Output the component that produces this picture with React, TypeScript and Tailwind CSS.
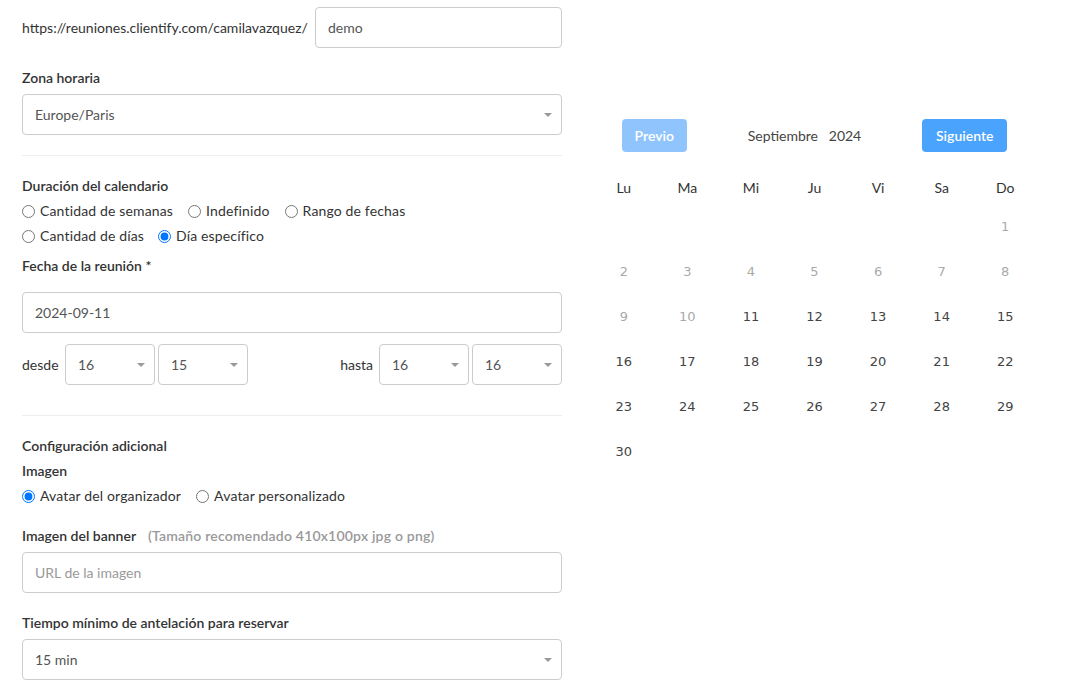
import React from 'react';

const font = { fontFamily: 'Lato, "Open Sans", sans-serif' };

const Caret = () => (
  <span className="pointer-events-none absolute right-[9px] top-1/2 -translate-y-1/2 w-0 h-0 border-l-[4px] border-r-[4px] border-t-[4px] border-l-transparent border-r-transparent border-t-[#999]" />
);

const SelectBox = ({ value, className = '' }: { value: string; className?: string }) => (
  <div className={`relative h-[41px] border border-[#ccc] rounded bg-white flex items-center pl-3 text-sm text-[#555] ${className}`}>
    {value}
    <Caret />
  </div>
);

const TextBox = ({ value, placeholder, className = '' }: { value?: string; placeholder?: string; className?: string }) => (
  <input
    readOnly
    value={value}
    placeholder={placeholder}
    className={`h-[41px] border border-[#ccc] rounded bg-white px-3 text-sm text-[#555] placeholder:text-[#999] outline-none ${className}`}
  />
);

const Radio = ({ label, checked = false }: { label: string; checked?: boolean }) => (
  <label className="flex items-center gap-[5px] text-sm text-[#333] tracking-[0.15px]">
    <input type="radio" defaultChecked={checked} className="m-0 w-[13px] h-[13px] accent-[#0075ff]" />
    {label}
  </label>
);

const Label = ({ children }: { children: React.ReactNode }) => (
  <div className="text-sm font-semibold text-[#333]">{children}</div>
);

const days: { d: number | null; muted?: boolean }[] = [
  { d: null }, { d: null }, { d: null }, { d: null }, { d: null }, { d: null }, { d: 1, muted: true },
  ...Array.from({ length: 29 }, (_, i) => ({ d: i + 2, muted: i + 2 < 11 })),
];

export default function App() {
  const weekdays = ['Lu', 'Ma', 'Mi', 'Ju', 'Vi', 'Sa', 'Do'];
  return (
    <div className="w-[1082px] h-[686px] bg-white overflow-hidden flex" style={font}>
      {/* Formulario */}
      <div className="w-[540px] ml-[22px] pt-[7px] flex flex-col">
        <div className="flex items-center">
          <span className="text-sm text-[#333] w-[293px]">https://reuniones.clientify.com/camilavazquez/</span>
          <TextBox value="demo" className="flex-1" />
        </div>

        <div className="mt-[20px]"><Label>Zona horaria</Label></div>
        <SelectBox value="Europe/Paris" className="mt-[6px]" />
        <div className="h-px bg-[#eee] mt-[20px]" />

        <div className="mt-[20px]"><Label>Duración del calendario</Label></div>
        <div className="flex gap-[15px] mt-[5px]">
          <Radio label="Cantidad de semanas" />
          <Radio label="Indefinido" />
          <Radio label="Rango de fechas" />
        </div>
        <div className="flex gap-[14px] mt-[5px]">
          <Radio label="Cantidad de días" />
          <Radio label="Día específico" checked />
        </div>
        <div className="mt-[10px]"><Label>Fecha de la reunión *</Label></div>
        <TextBox value="2024-09-11" className="mt-[16px] w-full" />

        <div className="flex items-center mt-[11px] text-sm text-[#333]">
          <span className="w-[43px]">desde</span>
          <SelectBox value="16" className="w-[90px]" />
          <SelectBox value="15" className="w-[90px] ml-[3px]" />
          <span className="flex-1 text-right pr-[6px]">hasta</span>
          <SelectBox value="16" className="w-[90px]" />
          <SelectBox value="16" className="w-[90px] ml-[3px]" />
        </div>
        <div className="h-px bg-[#eee] mt-[30px]" />

        <div className="mt-[20px]"><Label>Configuración adicional</Label></div>
        <div className="mt-[5px]"><Label>Imagen</Label></div>
        <div className="flex gap-[15px] mt-[5px]">
          <Radio label="Avatar del organizador" checked />
          <Radio label="Avatar personalizado" />
        </div>
        <div className="mt-[20px] flex items-center gap-[12px]">
          <Label>Imagen del banner</Label>
          <span className="text-sm font-semibold text-[#999] tracking-[0.2px]">(Tamaño recomendado 410x100px jpg o png)</span>
        </div>
        <TextBox placeholder="URL de la imagen" className="mt-[6px] w-full" />
        <div className="mt-[20px]"><Label>Tiempo mínimo de antelación para reservar</Label></div>
        <SelectBox value="15 min" className="mt-[6px]" />
      </div>

      {/* Calendario */}
      <div className="ml-[30px] w-[445px] pt-[119px]">
        <div className="flex items-center h-[33px]">
          <div className="w-[95px] flex justify-end">
            <button className="h-[33px] px-[13px] rounded bg-[#90c4fd] text-white text-sm font-semibold">Previo</button>
          </div>
          <div className="flex-1 text-center text-sm text-[#444]">Septiembre&nbsp;&nbsp;&nbsp;2024</div>
          <div className="w-[115px]">
            <button className="h-[33px] px-[14px] rounded bg-[#4aa3fd] text-white text-sm font-semibold">Siguiente</button>
          </div>
        </div>
        <div className="grid grid-cols-7 mt-[26px] text-sm text-[#333]">
          {weekdays.map((w) => (
            <div key={w} className="text-center h-[22px]">{w}</div>
          ))}
        </div>
        <div className="grid grid-cols-7 mt-[17px]" style={{ fontFamily: '"DejaVu Sans", Verdana, sans-serif' }}>
          {days.map((c, i) => (
            <div
              key={i}
              className={`text-center h-[45px] text-[13px] ${c.muted ? 'text-[#aaa]' : 'text-[#444]'}`}
            >
              {c.d ?? ''}
            </div>
          ))}
        </div>
      </div>
    </div>
  );
}
